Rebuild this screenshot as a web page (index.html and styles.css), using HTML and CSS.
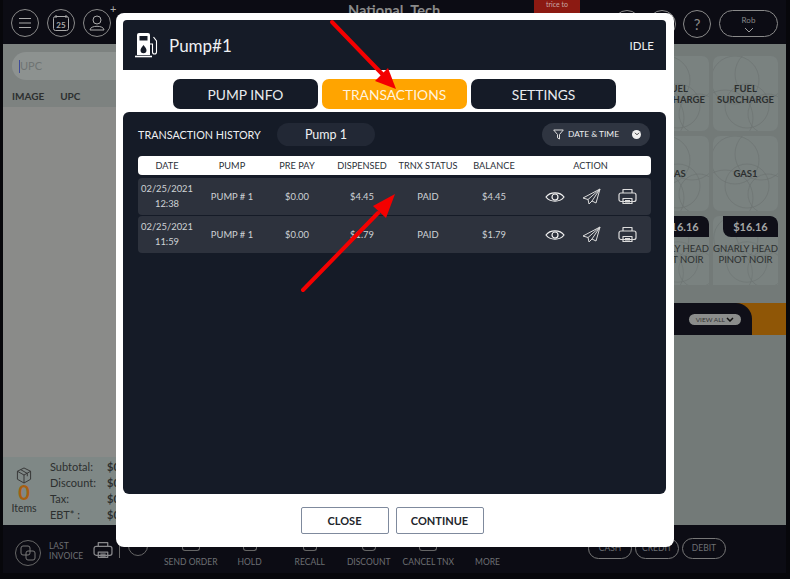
FILE: index.html
```html
<!DOCTYPE html>
<html lang="en">
<head>
<meta charset="utf-8">
<title>Pump#1</title>
<link rel="stylesheet" href="styles.css">
</head>
<body>
<svg class="defs" width="0" height="0">
  <defs>
    <g id="scribble" fill="none" stroke="#6c7271" stroke-width=".6">
      <circle cx="22" cy="24" r="24"/><circle cx="48" cy="18" r="26"/><circle cx="34" cy="50" r="22"/><circle cx="12" cy="62" r="28"/><circle cx="55" cy="58" r="20"/>
    </g>
    <g id="i-eye" fill="none" stroke="#f2f2f2" stroke-width="1.2">
      <path d="M1 8c4-5.500 14-5.500 18 0-4 5.500-14 5.500-18 0z"/><circle cx="10" cy="8" r="3"/>
    </g>
    <g id="i-send" fill="none" stroke="#dcdcdc" stroke-width="1" stroke-linejoin="round">
      <path d="M18 1L1 10l5 1.500 1 4.500 3-3 4 2z"/><path d="M18 1L6 11.500M18 1L10 13"/>
    </g>
    <g id="i-print" fill="none" stroke="#dcdcdc" stroke-width="1.2" stroke-linejoin="round">
      <path d="M5 5V1.500h9V5"/><rect x="1" y="5" width="17" height="8.500" rx="2"/><path d="M5 10.500h9v5H5zM7 12.500h5M7 14h5"/>
    </g>
  </defs>
</svg>

<div class="app">
  <header class="topbar">
    <div class="top-left">
      <span class="circle"><svg width="14" height="12" viewBox="0 0 14 12"><path d="M1 1.500h12M1 6h12M1 10.500h12" stroke="#aaa" stroke-width="1.200" fill="none"/></svg></span>
      <span class="circle"><svg width="18" height="18" viewBox="0 0 18 18"><rect x="1.500" y="2.500" width="15" height="14" rx="2" fill="none" stroke="#aaa"/><path d="M4 1v3M14 1v3" stroke="#aaa"/><text x="9" y="14" class="cal-num">25</text></svg></span>
      <span class="circle"><svg width="18" height="18" viewBox="0 0 18 18"><circle cx="9" cy="6" r="4" fill="none" stroke="#aaa"/><path d="M2 16c0-5 14-5 14 0z" fill="none" stroke="#aaa"/></svg></span>
      <span class="plus">+</span>
    </div>
    <div class="top-title">National_Tech</div>
    <div class="notice">trice to</div>
    <div class="top-right">
      <span class="circle"></span>
      <span class="circle"></span>
      <span class="circle help">?</span>
      <span class="user-pill">Rob<svg width="10" height="6" viewBox="0 0 10 6"><path d="M1 1l4 4 4-4" fill="none" stroke="#999"/></svg></span>
    </div>
  </header>

  <main class="workspace">
    <section class="cart">
      <div class="cart-top">
        <div class="upc-input"><i class="caret"></i>UPC</div>
        <div class="cart-head"><span>IMAGE</span><span>UPC</span></div>
      </div>
      <div class="cart-body"></div>
      <div class="totals">
        <div class="items">
          <svg width="16" height="17" viewBox="0 0 17 18"><path d="M8.500 1l7 3.500v8.500l-7 4-7-4V4.500zM1.500 4.500l7 4 7-4M8.500 8.500V17M5 2.800l7 4v3" fill="none" stroke="#333" stroke-width="1"/></svg>
          <b>0</b>
          <span>Items</span>
        </div>
        <dl class="sums">
          <dt>Subtotal:</dt><dd>$0</dd>
          <dt>Discount:</dt><dd>$0</dd>
          <dt>Tax:</dt><dd>$0</dd>
          <dt>EBT* :</dt><dd>$0</dd>
        </dl>
      </div>
    </section>
    <section class="catalog">
      <div class="tiles">
        <div class="tile"><svg class="scrib" viewBox="0 0 65 75"><use href="#scribble"/></svg><span>FUEL<br>SURCHARGE</span></div>
        <div class="tile"><svg class="scrib" viewBox="0 0 65 75"><use href="#scribble"/></svg><span>FUEL<br>SURCHARGE</span></div>
        <div class="tile"><svg class="scrib" viewBox="0 0 65 75"><use href="#scribble"/></svg><span>GAS</span></div>
        <div class="tile"><svg class="scrib" viewBox="0 0 65 75"><use href="#scribble"/></svg><span>GAS1</span></div>
        <div class="tile priced"><svg class="scrib" viewBox="0 0 65 75"><use href="#scribble"/></svg><em>$16.16</em><span>GNARLY HEAD<br>PINOT NOIR</span></div>
        <div class="tile priced"><svg class="scrib" viewBox="0 0 65 75"><use href="#scribble"/></svg><em>$16.16</em><span>GNARLY HEAD<br>PINOT NOIR</span></div>
      </div>
      <div class="band"><div class="band-tab"><span class="view-all">VIEW ALL <svg width="8" height="5" viewBox="0 0 8 5"><path d="M1 1l3 3 3-3" fill="none" stroke="#111" stroke-width="1.500"/></svg></span></div></div>
    </section>
  </main>

  <footer class="bottombar">
    <div class="last-invoice">
      <span class="circle small"><svg width="16" height="16" viewBox="0 0 16 16"><rect x="1" y="1" width="9" height="9" rx="2" fill="none" stroke="#777"/><rect x="6" y="6" width="9" height="9" rx="2" fill="none" stroke="#777"/></svg></span>
      <span class="li-text">LAST<br>INVOICE</span>
      <svg class="li-print" width="20" height="18" viewBox="0 0 19 17"><use href="#i-print"/></svg>
      <i class="vline"></i>
      <span class="circle peek"></span>
    </div>
    <nav class="actions">
      <span class="act send"><i class="stub box"></i>SEND ORDER</span>
      <span class="act hold"><i class="stub"></i>HOLD</span>
      <span class="act recall"><i class="stub"></i>RECALL</span>
      <span class="act disc"><i class="stub round"></i>DISCOUNT</span>
      <span class="act cancel"><i class="stub box"></i>CANCEL TNX</span>
      <span class="act more">MORE</span>
    </nav>
    <div class="pay"><span>CASH</span><span>CREDIT</span><span>DEBIT</span></div>
  </footer>
</div>

<div class="modal">
  <div class="modal-head">
    <svg class="pump-icon" width="24" height="26" viewBox="0 0 24 26">
      <path d="M2 3a2 2 0 0 1 2-2h9a2 2 0 0 1 2 2v20H2z" fill="#fff"/>
      <rect x="4.500" y="4" width="8" height="4.500" fill="#151b27"/>
      <path d="M8.500 13c2 2.500 3 4 3 5.200a3 3 0 0 1-6 0c0-1.200 1-2.700 3-5.200z" fill="#151b27"/>
      <path d="M0 24.500h17" stroke="#fff" stroke-width="1.600"/>
      <path d="M15 12h2.500v8a2 2 0 0 0 4 0V9l-3-4" fill="none" stroke="#fff" stroke-width="1.100"/>
    </svg>
    <span class="pump-name">Pump#1</span>
    <span class="pump-state">IDLE</span>
  </div>
  <div class="tabs">
    <button class="tab">PUMP INFO</button>
    <button class="tab active">TRANSACTIONS</button>
    <button class="tab">SETTINGS</button>
  </div>
  <div class="panel">
    <div class="panel-bar">
      <span class="hist-label">TRANSACTION HISTORY</span>
      <span class="pump-select">Pump 1</span>
      <span class="date-filter">
        <svg width="11" height="11" viewBox="0 0 11 11"><path d="M.7 1h9.600L6.500 5.500V10l-2-1.200V5.500z" fill="none" stroke="#ddd"/></svg>
        DATE &amp; TIME
        <span class="dot"><svg width="7" height="5" viewBox="0 0 7 5"><path d="M1 1l2.500 2.500L6 1" fill="none" stroke="#333" stroke-width="1.200"/></svg></span>
      </span>
    </div>
    <div class="row thead">
      <span>DATE</span><span>PUMP</span><span>PRE PAY</span><span>DISPENSED</span><span>TRNX STATUS</span><span>BALANCE</span><span>ACTION</span>
    </div>
    <div class="row tr">
      <span class="date">02/25/2021<br>12:38</span><span>PUMP # 1</span><span>$0.00</span><span>$4.45</span><span>PAID</span><span>$4.45</span>
      <span class="acts">
        <svg width="20" height="16" viewBox="0 0 20 16"><use href="#i-eye"/></svg>
        <svg width="19" height="17" viewBox="0 0 19 17"><use href="#i-send"/></svg>
        <svg width="19" height="17" viewBox="0 0 19 17"><use href="#i-print"/></svg>
      </span>
    </div>
    <div class="row tr">
      <span class="date">02/25/2021<br>11:59</span><span>PUMP # 1</span><span>$0.00</span><span>$1.79</span><span>PAID</span><span>$1.79</span>
      <span class="acts">
        <svg width="20" height="16" viewBox="0 0 20 16"><use href="#i-eye"/></svg>
        <svg width="19" height="17" viewBox="0 0 19 17"><use href="#i-send"/></svg>
        <svg width="19" height="17" viewBox="0 0 19 17"><use href="#i-print"/></svg>
      </span>
    </div>
  </div>
  <div class="modal-foot">
    <button class="btn">CLOSE</button>
    <button class="btn">CONTINUE</button>
  </div>
</div>

<svg class="arrows" width="790" height="579" viewBox="0 0 790 579">
  <path d="M332 22L386 78" stroke="#f40000" stroke-width="4" stroke-linecap="round"/>
  <path d="M396 89L375 81L388 68z" fill="#f40000"/>
  <path d="M303 290L378 213" stroke="#f40000" stroke-width="4" stroke-linecap="round"/>
  <path d="M395 194L386 218L373 206z" fill="#f40000"/>
</svg>
</body>
</html>
```
FILE: styles.css
```css
* { box-sizing: border-box; }
html, body { margin: 0; height: 100%; }
body {
  width: 790px;
  height: 579px;
  overflow: hidden;
  position: relative;
  background: #07070b;
  font-family: Lato, "Open Sans", sans-serif;
}
.defs { position: absolute; }

/* dimmed application behind the dialog */
.app {
  width: 783px;
  height: 573px;
  margin-left: 3px;
  display: flex;
  flex-direction: column;
  background: #0c0c14;
  color: #2c2f2f;
}
.topbar {
  height: 44px;
  flex: none;
  display: flex;
  align-items: center;
  padding: 0 8px;
  position: relative;
}
.top-left { display: flex; gap: 8px; margin-top: 2px; position: relative; }
.plus { position: absolute; left: 99px; top: -6px; color: #aaa; font-size: 11px; line-height: 12px; }
.circle {
  width: 28px;
  height: 28px;
  flex: none;
  border: 1px solid #8a8a8a;
  border-radius: 50%;
  display: flex;
  align-items: center;
  justify-content: center;
}
.cal-num { font: 700 8px Lato, sans-serif; fill: #aaa; text-anchor: middle; }
.top-title { margin-left: 237px; margin-top: -24px; font-size: 14.600px; font-weight: 700; color: #8a8a8a; width: 96px; white-space: nowrap; }
.notice {
  width: 46px;
  height: 13px;
  margin-left: 90px;
  align-self: flex-start;
  background: #8c1a12;
  color: #c9a8a5;
  font-size: 7px;
  text-align: center;
}
.top-right { display: flex; gap: 7px; margin-left: auto; align-items: center; margin-top: 3px; }
.top-right .help { color: #8a8a8a; font-size: 15px; }
.user-pill {
  width: 59px;
  height: 27px;
  margin-left: 1px;
  border: 1px solid #8a8a8a;
  border-radius: 14px;
  display: flex;
  flex-direction: column;
  align-items: center;
  color: #8a8a8a;
  font-size: 8px;
  padding-top: 4px;
  gap: 2px;
}

.workspace { flex: 1; display: flex; min-height: 0; background: #737a78; }
.cart { width: 400px; display: flex; flex-direction: column; }
.cart-top { background: #7d8280; height: 63px; padding: 8px 9px 0; }
.upc-input {
  height: 28px;
  width: 240px;
  border-radius: 14px;
  background: #8d9290;
  color: #6f7473;
  font-size: 11px;
  line-height: 28px;
  padding-left: 7px;
  display: flex;
  align-items: center;
}
.caret { width: 1px; height: 13px; background: #3b4a9a; display: block; }
.cart-head { display: flex; gap: 16px; font-size: 10px; font-weight: 700; margin-top: 10px; }
.cart-body { flex: 1; background: #8a8b89; }
.totals { height: 68px; background: #7f8886; display: flex; padding-left: 9px; font-size: 11px; }
.items { width: 24px; display: flex; flex-direction: column; align-items: center; padding-top: 10px; }
.items b { font-size: 20px; color: #a85f10; line-height: 17px; margin-top: 0; }
.items span { line-height: 16px; font-size: 10.500px; margin-top: -1px; }
.sums {
  margin: 1px 0 0 14px;
  display: grid;
  grid-template-columns: 57px auto;
  grid-auto-rows: 16px;
  align-items: center;
}
.sums dt { white-space: nowrap; }
.sums dd { margin: 0; font-weight: 700; }

.catalog { flex: 1; position: relative; }
.tiles {
  display: grid;
  grid-template-columns: 65px 65px;
  grid-template-rows: 75px 75px 69px;
  gap: 5px 4px;
  position: absolute;
  top: 12px;
  right: 8px;
}
.tile {
  position: relative;
  border-radius: 6px 6px 0 0;
  background: #7a8280;
  display: flex;
  flex-direction: column;
  align-items: center;
  justify-content: center;
  text-align: center;
  font-size: 9.500px;
  font-weight: 700;
  line-height: 11px;
  overflow: hidden;
}
.tile:nth-child(-n+4) { border-radius: 7px; }
.scrib { position: absolute; inset: 0; width: 100%; height: 100%; }
.tile span, .tile em { position: relative; }
.tile.priced { justify-content: flex-start; align-items: stretch; }
.tile em {
  align-self: flex-end;
  width: 55px;
  height: 21px;
  border-radius: 0 8px 0 8px;
  background: #0f0f18;
  color: #a4a6a6;
  font-style: normal;
  font-size: 11px;
  line-height: 21px;
}
.tile.priced span { margin-top: 6px; white-space: nowrap; font-weight: 400; }
.band {
  position: absolute;
  right: 0;
  top: 259px;
  width: 386px;
  height: 32px;
  background: #8f5606;
}
.band-tab {
  width: 352px;
  height: 32px;
  background: #0f0f18;
  border-radius: 0 16px 0 0;
  display: flex;
  justify-content: flex-end;
  align-items: center;
  padding-right: 11px;
}
.view-all {
  width: 52px;
  height: 11px;
  background: #8b8d8c;
  border-radius: 6px;
  font-size: 6.500px;
  line-height: 11px;
  text-align: center;
  color: #333;
}

.bottombar { height: 48px; flex: none; position: relative; display: flex; align-items: flex-start; color: #6d6f73; font-size: 8.500px; }
.last-invoice { display: flex; align-items: center; margin: 15px 0 0 12px; gap: 8px; width: 134px; flex: none; }
.circle.small { width: 26px; height: 26px; border-color: #666; }
.li-text { line-height: 10px; width: 36px; padding-bottom: 4px; flex: none; }
.li-print { flex: none; margin-bottom: 6px; opacity: .6; }
.vline { width: 1px; height: 18px; background: #666; flex: none; margin: 0 0 8px -2px; }
.circle.peek { width: 20px; height: 20px; border-color: #666; margin: -14px 0 0 0; }
.actions { display: flex; margin: 22px 0 0 0; width: 361px; flex: none; align-items: flex-end; padding-left: 15px; }
.act { white-space: nowrap; display: flex; flex-direction: column; align-items: center; gap: 6px; }
.stub { display: block; width: 14px; height: 4px; border: 1px solid #666; border-top: 0; border-radius: 0 0 3px 3px; }
.stub.box { width: 18px; }
.stub.round { border-radius: 0 0 8px 8px; }
.send { margin-right: 20px; }
.hold { margin-right: 33px; }
.recall { margin-right: 22px; }
.disc { margin-right: 12px; }
.cancel { margin-right: 21px; }
.pay { display: flex; gap: 3px; margin: 13px 0 0 0; padding-left: 78px; }
.pay span {
  width: 44px;
  height: 21px;
  border: 1px solid #777;
  border-radius: 11px;
  text-align: center;
  line-height: 19px;
}

/* dialog */
.modal {
  position: absolute;
  left: 116px;
  top: 13px;
  width: 558px;
  height: 534px;
  padding: 7px 8px 0 7px;
  background: #fff;
  border-radius: 8px;
  display: flex;
  flex-direction: column;
  color: #eef0f2;
}
.modal-head {
  height: 50px;
  flex: none;
  background: #151b27;
  border-radius: 4px 4px 0 0;
  display: flex;
  align-items: center;
  padding: 0 12px;
}
.pump-icon { margin-right: 10px; }
.pump-name { font-size: 17px; }
.pump-state { margin-left: auto; font-size: 11.500px; }
.tabs { display: flex; gap: 4px; margin: 9px 0 3px 50px; }
.tab {
  width: 145px;
  height: 30px;
  border: 0;
  padding: 0;
  border-radius: 7px;
  background: #151b27;
  color: #e9ebee;
  font: 13.800px Lato, sans-serif;
}
.tab.active { background: #ffa400; color: #fff3de; }
.panel {
  flex: 1;
  background: #151b27;
  border-radius: 6px;
  padding: 10px 15px 0;
}
.panel-bar { display: flex; align-items: center; height: 24px; margin-bottom: 10px; font-size: 10.800px; }
.hist-label { width: 139px; white-space: nowrap; }
.pump-select {
  width: 98px;
  height: 23px;
  border-radius: 12px;
  background: #222835;
  text-align: center;
  line-height: 23px;
  font-size: 12.500px;
}
.date-filter {
  margin-left: auto;
  margin-right: 1px;
  width: 108px;
  height: 23px;
  border-radius: 12px;
  background: #2f3541;
  display: flex;
  align-items: center;
  padding: 0 9px 0 11px;
  gap: 4px;
  font-size: 8.400px;
}
.dot {
  margin-left: auto;
  width: 9px;
  height: 9px;
  border-radius: 50%;
  background: #eee;
  display: flex;
  align-items: center;
  justify-content: center;
}
.dot svg { width: 6px; height: 4px; }
.row {
  display: grid;
  grid-template-columns: 58px 72px 58px 72px 60px 72px 121px;
  align-items: center;
  text-align: center;
  width: 513px;
}
.thead {
  height: 19px;
  background: #fff;
  border-radius: 4px;
  color: #2b2f38;
  font-size: 9.200px;
  margin-bottom: 3px;
}
.thead span { white-space: nowrap; }
.tr {
  height: 37px;
  margin-bottom: 1px;
  background: #2d323d;
  border-radius: 4px;
  color: #cfd2d6;
  font-size: 9.400px;
}
.date { line-height: 14.500px; white-space: nowrap; }
.acts { display: flex; justify-content: center; align-items: center; gap: 17px; }
.modal-foot {
  height: 53px;
  flex: none;
  display: flex;
  justify-content: center;
  align-items: center;
  gap: 7px;
  padding-right: 5px;
}
.btn {
  width: 88px;
  height: 27px;
  background: #fff;
  border: 1px solid #7f8a9d;
  border-radius: 2px;
  color: #22252b;
  font: 700 11px Lato, sans-serif;
  padding: 0;
}
.arrows { position: absolute; left: 0; top: 0; pointer-events: none; }
```
